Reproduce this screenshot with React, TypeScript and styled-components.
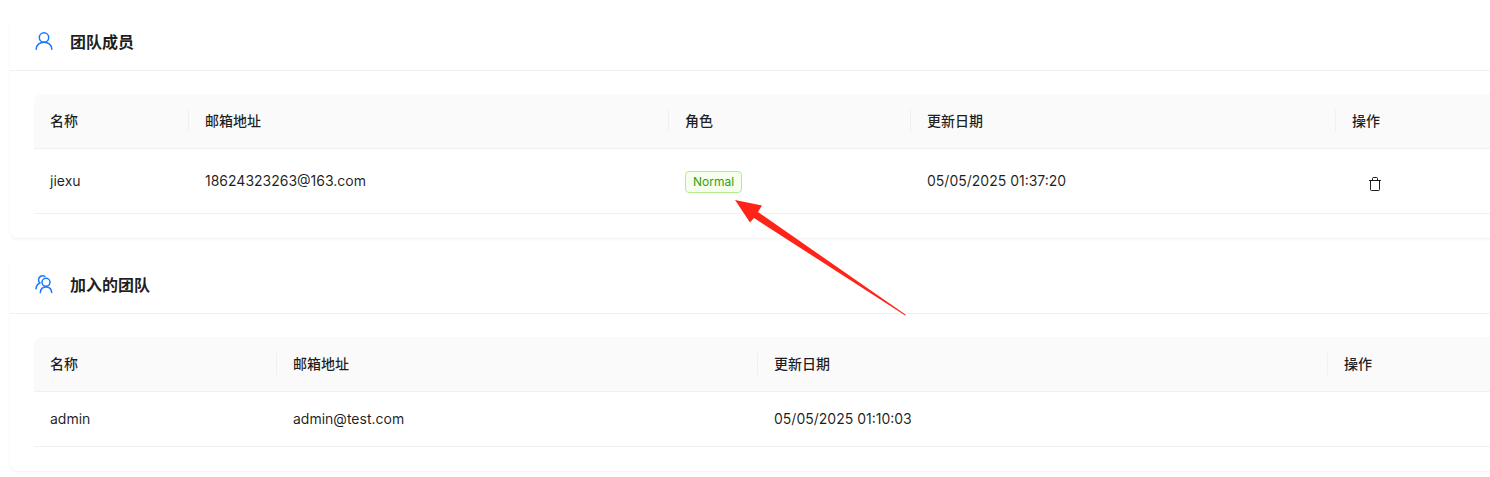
import React from "react";
import styled, { createGlobalStyle } from "styled-components";

const Global = createGlobalStyle`
  html, body { margin: 0; padding: 0; background: #ffffff; overflow: hidden; }
  body { font-family: Inter, "Noto Sans CJK SC", sans-serif; color: rgba(0,0,0,0.88); }
`;

const Page = styled.div`
  position: relative;
  width: 1490px;
  height: 477px;
  overflow: hidden;
  padding: 15px 0 0 10px;
  box-sizing: border-box;
  display: flex;
  flex-direction: column;
  gap: 20px;
`;

const Card = styled.section`
  width: 1520px;
  background: #fff;
  border-radius: 8px;
  box-shadow: 0 1px 2px 0 rgba(0,0,0,0.03), 0 1px 6px -1px rgba(0,0,0,0.02), 0 2px 4px 0 rgba(0,0,0,0.02);
`;

const CardHeader = styled.header`
  height: 55px;
  border-bottom: 1px solid #f0f0f0;
  display: flex;
  align-items: center;
  padding-left: 25px;
  gap: 17px;
`;

const HeaderIcon = styled.svg`
  width: 18px;
  height: 20px;
  margin-top: -4px;
  flex: none;
  fill: none;
  stroke: #1677ff;
  stroke-width: 1.5;
  stroke-linecap: round;
`;

const Title = styled.h2`
  margin: 0 0 2px;
  font-size: 16px;
  font-weight: 600;
  line-height: 24px;
  color: rgba(0,0,0,0.88);
`;

const CardBody = styled.div`
  padding: 23px 24px 24px;
`;

const Row = styled.div<{ $cols: string; $height: number }>`
  display: grid;
  grid-template-columns: ${(p) => p.$cols};
  height: ${(p) => p.$height}px;
  border-bottom: 1px solid #f0f0f0;
  align-items: center;
  font-size: 14px;
  line-height: 22px;
`;

const HeadRow = styled(Row)`
  background: #fafafa;
  border-radius: 8px 8px 0 0;
  font-weight: 500;
`;

const HeadCell = styled.div<{ $first?: boolean }>`
  position: relative;
  padding-left: 16px;
  &::before {
    content: "";
    display: ${(p) => (p.$first ? "none" : "block")};
    position: absolute;
    left: -1px;
    top: 0;
    width: 1px;
    height: 22px;
    background: #f0f0f0;
  }
`;

const Cell = styled.div`
  padding-left: 16px;
  font-weight: 400;
`;

const Tag = styled.span`
  display: inline-block;
  box-sizing: border-box;
  height: 22px;
  line-height: 20px;
  padding: 0 7px;
  font-size: 12px;
  color: #389e0d;
  background: #f6ffed;
  border: 1px solid #b7eb8f;
  border-radius: 4px;
  margin-top: 2px;
  vertical-align: top;
`;

const IconButton = styled.button`
  display: flex;
  align-items: center;
  justify-content: center;
  width: 46px;
  height: 22px;
  padding: 0;
  margin-top: 5px;
  border: 0;
  background: transparent;
  color: rgba(0,0,0,0.88);
`;

const TrashIcon = styled.svg`
  width: 14px;
  height: 16px;
  fill: none;
  stroke: currentColor;
  stroke-width: 1;
`;

const ArrowLayer = styled.svg`
  position: absolute;
  left: 0;
  top: 0;
  width: 1490px;
  height: 477px;
  pointer-events: none;
`;

const teamCols = "155px 480px 242px 425px 1fr";
const joinedCols = "243px 481px 570px 1fr";

export default function App() {
  return (
    <Page>
      <Global />
      <Card>
        <CardHeader>
          <HeaderIcon viewBox="0 0 18 20">
            <circle cx="9" cy="6.5" r="4.7" />
            <path d="M1.2 18.2c0-4.2 3.4-7 7.8-7s7.800 2.800 7.800 7" />
          </HeaderIcon>
          <Title>团队成员</Title>
        </CardHeader>
        <CardBody>
          <HeadRow $cols={teamCols} $height={54}>
            <HeadCell $first>名称</HeadCell>
            <HeadCell>邮箱地址</HeadCell>
            <HeadCell>角色</HeadCell>
            <HeadCell>更新日期</HeadCell>
            <HeadCell>操作</HeadCell>
          </HeadRow>
          <Row $cols={teamCols} $height={64}>
            <Cell>jiexu</Cell>
            <Cell>18624323263@163.com</Cell>
            <Cell><Tag>Normal</Tag></Cell>
            <Cell>05/05/2025 01:37:20</Cell>
            <Cell>
              <IconButton aria-label="删除">
                <TrashIcon viewBox="0 0 14 16">
                  <path d="M1 4.500h12M4.500 4.500V2.500a1 1 0 0 1 1-1h3a1 1 0 0 1 1 1v2M2.500 4.500v9a1 1 0 0 0 1 1h7a1 1 0 0 0 1-1v-9" />
                </TrashIcon>
              </IconButton>
            </Cell>
          </Row>
        </CardBody>
      </Card>
      <Card>
        <CardHeader>
          <HeaderIcon viewBox="0 0 18 20">
            <circle cx="11" cy="8.300" r="4" />
            <path d="M5.300 18.500c.3-3.500 2.600-5.600 5.700-5.600s5.400 2.100 5.700 5.600" />
            <path d="M9.800 2.300A4.200 4.200 0 0 0 3.500 5.800c0 1.300.5 2.300 1.300 3.100C2.600 10 1.300 12 1 14.800" />
          </HeaderIcon>
          <Title>加入的团队</Title>
        </CardHeader>
        <CardBody>
          <HeadRow $cols={joinedCols} $height={54}>
            <HeadCell $first>名称</HeadCell>
            <HeadCell>邮箱地址</HeadCell>
            <HeadCell>更新日期</HeadCell>
            <HeadCell>操作</HeadCell>
          </HeadRow>
          <Row $cols={joinedCols} $height={54}>
            <Cell>admin</Cell>
            <Cell>admin@test.com</Cell>
            <Cell>05/05/2025 01:10:03</Cell>
            <Cell />
          </Row>
        </CardBody>
      </Card>
      <ArrowLayer viewBox="0 0 1490 477">
        <polygon points="735,200 762,205.500 758,212 905.800,314.800 905.200,315.600 754,218 750,222.500" fill="#ff2418" />
      </ArrowLayer>
    </Page>
  );
}
